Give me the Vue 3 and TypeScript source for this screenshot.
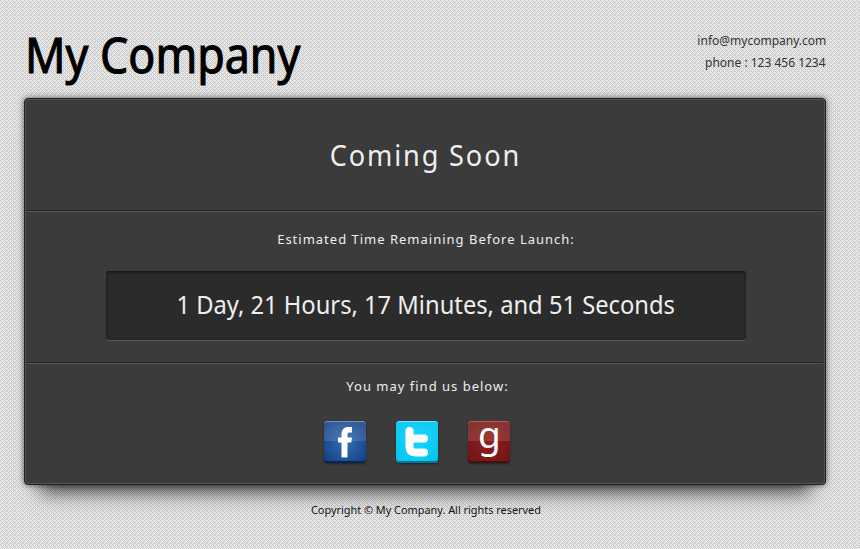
<script setup lang="ts">
const days: number = 1
const hours: number = 21
const minutes: number = 17
const seconds: number = 51
</script>

<template>
  <div class="page">
    <header class="header">
      <h1><span class="t title">My Company</span></h1>
      <address class="contact">
        <div><span class="t mail">info@mycompany.com</span></div>
        <div><span class="t phone">phone : 123 456 1234</span></div>
      </address>
    </header>

    <main class="panel">
      <section class="hero"><h2><span class="t soon">Coming Soon</span></h2></section>
      <section class="launch">
        <p><span class="t estimate">Estimated Time Remaining Before Launch:</span></p>
        <div class="countdown">
          <span class="t time">{{ days }} Day, {{ hours }} Hours, {{ minutes }} Minutes, and {{ seconds }} Seconds</span>
        </div>
      </section>
      <section class="social">
        <p><span class="t find">You may find us below:</span></p>
        <nav>
          <a class="icon facebook" aria-label="Facebook">
            <svg viewBox="0 0 42 42"><path d="M17.500 36.500V21.500h-3.500v-5h3.500v-3c0-5 2.500-7.500 7-7.500h3.500v5.500h-2.500c-1.500 0-2 .7-2 2v3h4.500l-.7 5h-3.800v15z" fill="#fff" /></svg>
          </a>
          <a class="icon twitter" aria-label="Twitter">
            <svg viewBox="0 0 42 42"><path d="M13.500 10V25q0 6.500 6 6.500h8.500M14 17.500h14" fill="none" stroke="#fff" stroke-width="8" stroke-linecap="round" /></svg>
          </a>
          <a class="icon goodreads" aria-label="Goodreads"><span>g</span></a>
        </nav>
      </section>
    </main>

    <footer><span class="t copy">Copyright © My Company. All rights reserved</span></footer>
  </div>
</template>

<style>
body {
  background: #e8e8e8 url("data:image/svg+xml,%3Csvg xmlns='http://www.w3.org/2000/svg' width='4' height='4' shape-rendering='crispEdges'%3E%3Cpath fill='%23c6c6c6' d='M0 0h1v1h-1zM1 1h1v1h-1zM3 1h1v1h-1zM2 2h1v1h-1zM1 3h1v1h-1zM3 3h1v1h-1z'/%3E%3C/svg%3E");
}
</style>

<style scoped>
.page {
  box-sizing: border-box;
  width: 860px;
  height: 549px;
  padding: 0 34px 0 24px;
  overflow: hidden;
  font-family: "Noto Sans", sans-serif;
}
h1, h2, p { margin: 0; font-weight: 400; }
.t { display: inline-block; white-space: nowrap; }
.header { display: flex; justify-content: space-between; height: 98px; }
h1 { width: 320px; padding: 19px 0 0 1px; font-size: 50px; line-height: 70px; color: #000; }
.title { transform: scaleX(0.895); transform-origin: left; -webkit-text-stroke: 1.1px #000; }
.contact { padding-top: 30px; font-size: 12.500px; line-height: 22px; font-style: normal; text-align: right; color: #333; }
.mail, .phone { transform: scaleX(0.96); transform-origin: right; }
.panel {
  box-sizing: border-box;
  height: 387px;
  border: 1px solid #202020;
  border-radius: 4px;
  background: #3b3b3b;
  box-shadow: inset 0 0 0 1px #555, 0 0 6px rgba(0, 0, 0, 0.6), 0 24px 18px -16px rgba(0, 0, 0, 0.65);
  color: #eee;
  text-align: center;
}
section { box-sizing: border-box; margin: 0 2px; }
.hero { height: 112px; padding-top: 35px; border-bottom: 1px solid #252525; }
h2 { font-size: 29px; line-height: 42px; letter-spacing: 2px; }
.soon { transform: scaleX(0.935); }
.launch { height: 152px; padding: 16px 0 0 2px; border-top: 1px solid #555; border-bottom: 1px solid #252525; }
p { font-size: 13px; line-height: 22px; letter-spacing: 1px; }
.find { padding-left: 5px; }
.countdown {
  box-sizing: border-box;
  width: 640px;
  height: 69px;
  margin: 21px auto 0;
  border-radius: 3px;
  background: #2b2b2b;
  box-shadow: inset 0 1px 3px #111, 0 1px 0 #585858;
  font-size: 25px;
  line-height: 66px;
}
.time { transform: scaleX(0.949); }
.social { border-top: 1px solid #555; padding-top: 11px; }
nav { display: flex; justify-content: center; gap: 30px; padding: 24px 16px 0 0; }
.icon {
  width: 42px;
  height: 42px;
  border-radius: 3px;
}
.icon svg { display: block; width: 42px; height: 42px; }
.facebook { background: linear-gradient(#ffffff1c 48%, transparent 0), radial-gradient(#3470b5, #123a80); box-shadow: inset 0 1px #6c95c5, inset 0 -2px #0c2450, 0 1px 2px #222; }
.twitter { background: linear-gradient(#ffffff0c 48%, transparent 0), radial-gradient(#15d5fb, #00c4ee); box-shadow: inset 0 1px #70e6ff, inset 0 -2px #087694, 0 1px 2px #222; }
.goodreads { background: linear-gradient(#ffffff20 48%, transparent 0), radial-gradient(#8e2020, #701313); box-shadow: inset 0 1px #b95b5b, inset 0 -2px #451010, 0 1px 2px #222; }
.goodreads span { display: block; padding-left: 1px; color: #fff; font-size: 37px; line-height: 26px; }
footer { height: 50px; line-height: 50px; font-size: 11.500px; text-align: center; color: #111; }
.copy { transform: translateX(0.5px) scaleX(0.947); }
</style>
